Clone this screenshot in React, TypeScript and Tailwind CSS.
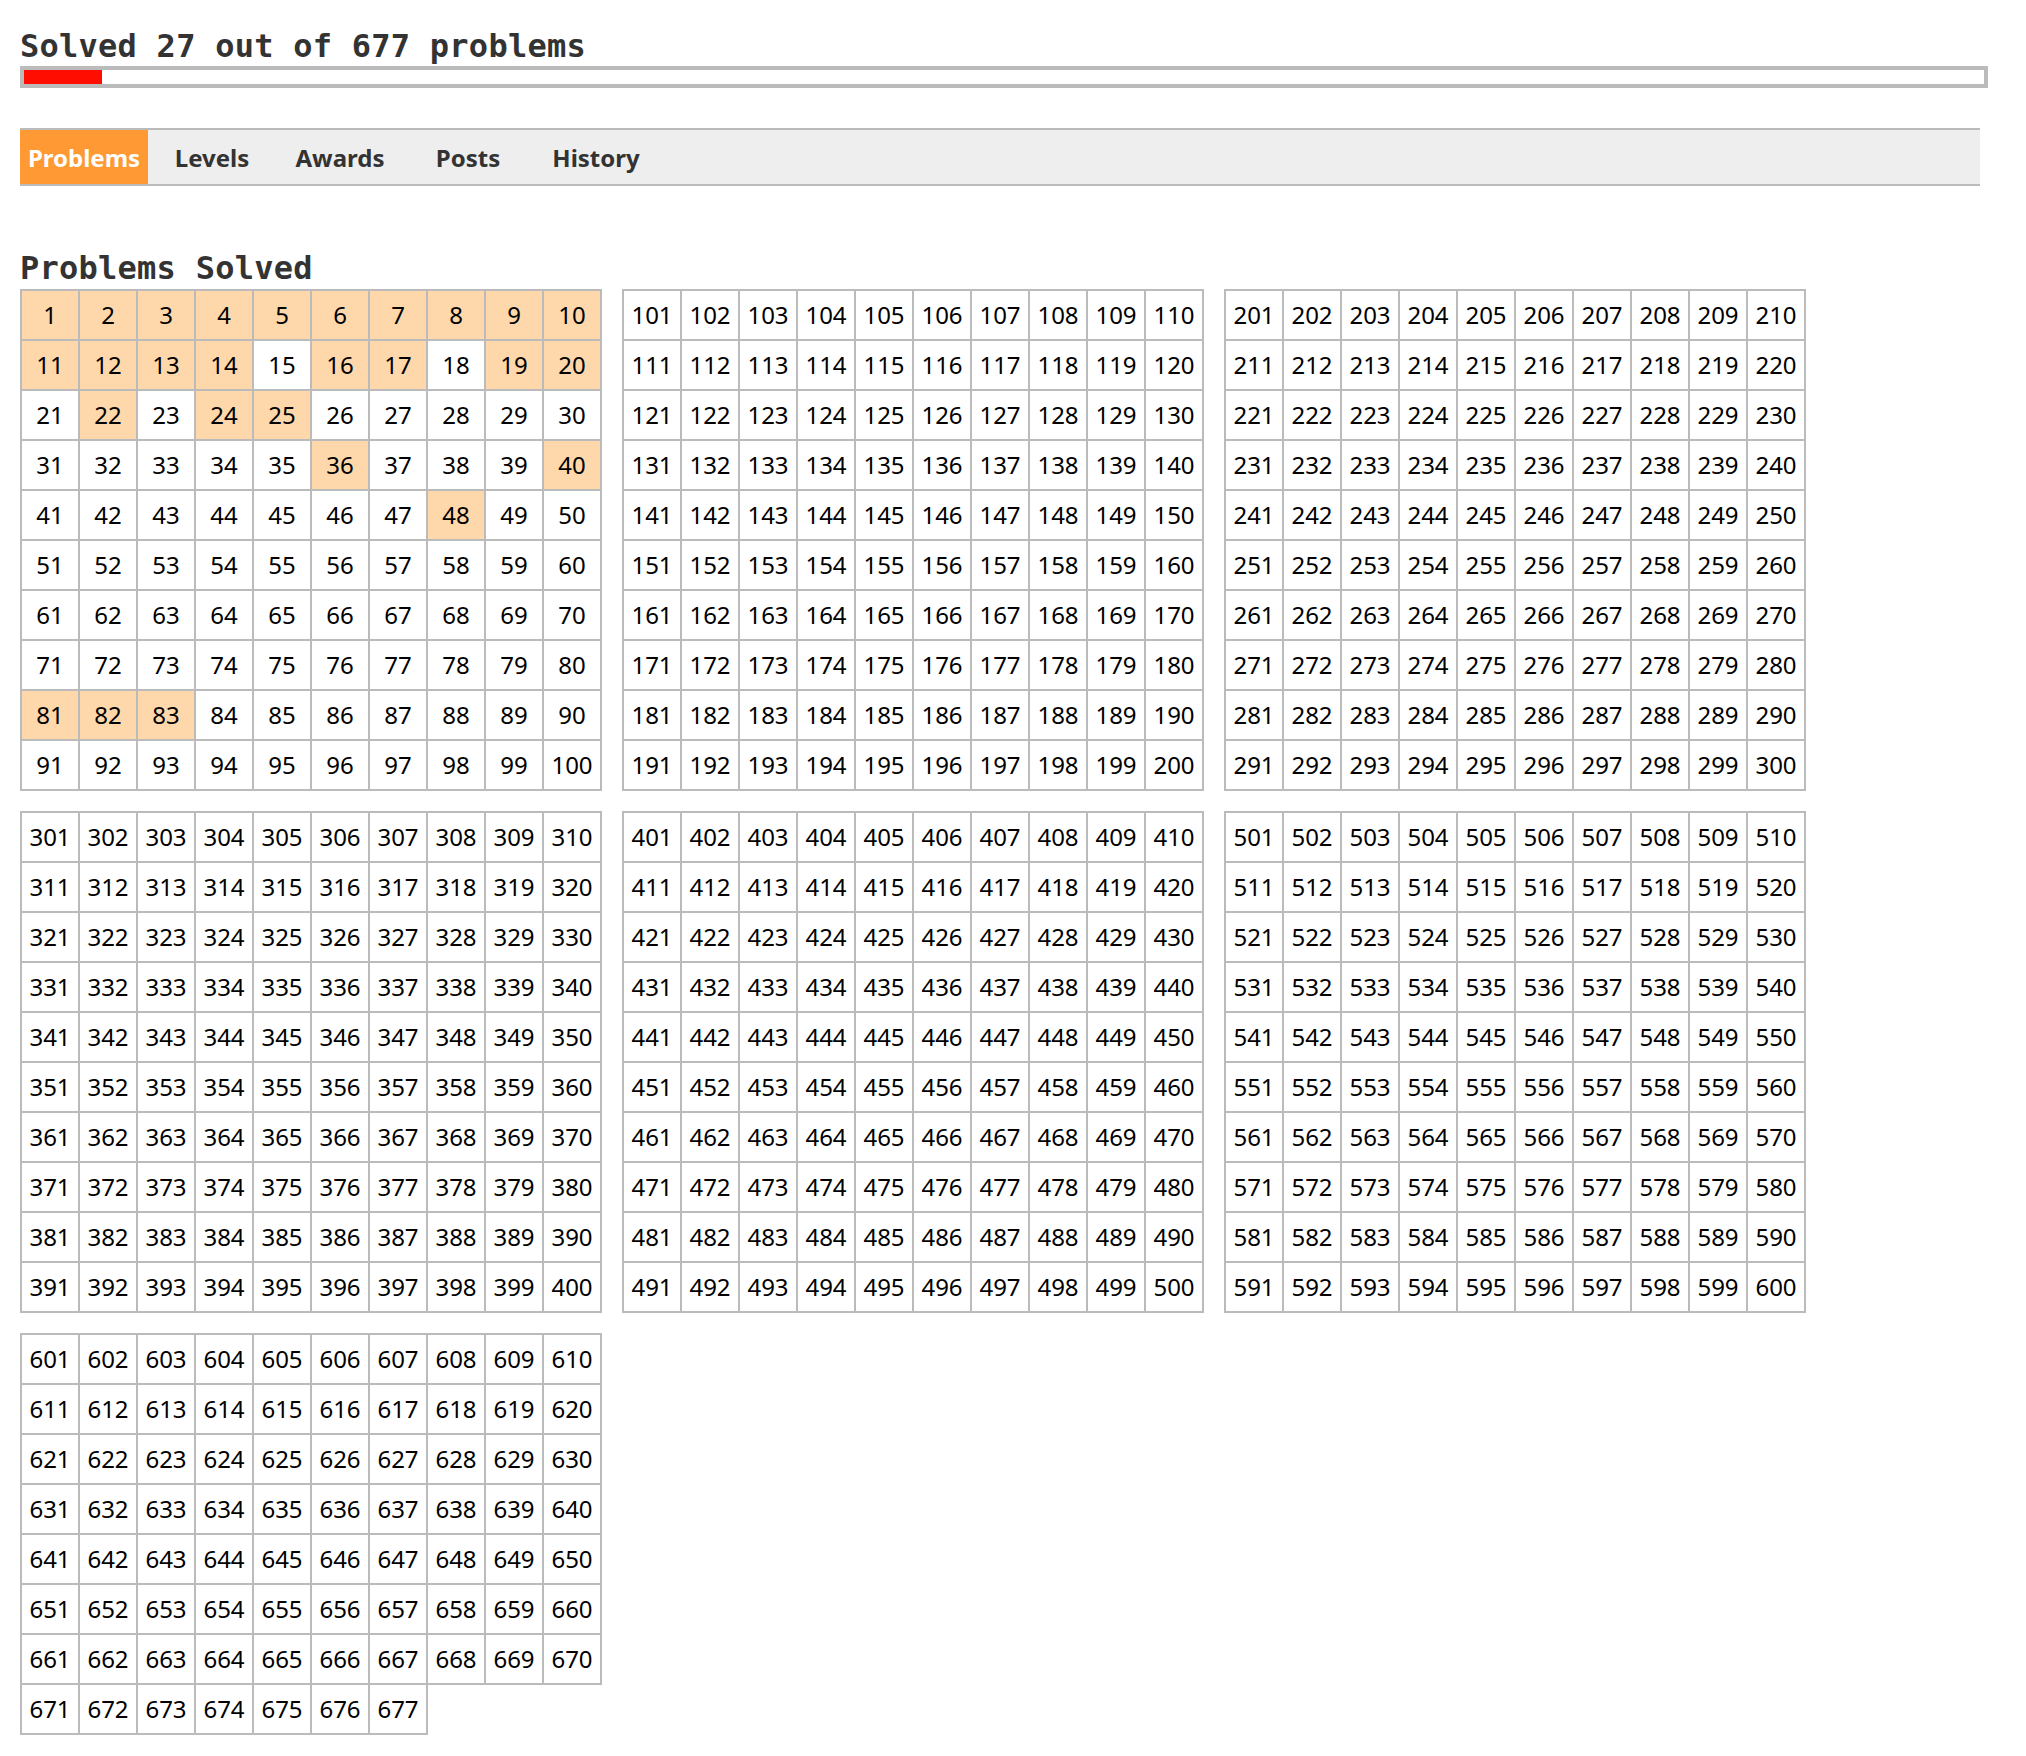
import React from "react";

const TOTAL = 677;
const SOLVED = new Set([
  1, 2, 3, 4, 5, 6, 7, 8, 9, 10, 11, 12, 13, 14, 16, 17, 19, 20, 22, 24, 25, 36, 40, 48, 81, 82, 83,
]);

const TABS = ["Problems", "Levels", "Awards", "Posts", "History"];

function Block({ start }: { start: number }) {
  const rows: number[][] = [];
  for (let r = 0; r < 10; r++) {
    const row: number[] = [];
    for (let c = 1; c <= 10; c++) {
      const n = start + r * 10 + c;
      if (n <= TOTAL) row.push(n);
    }
    if (row.length) rows.push(row);
  }
  return (
    <table className="border-collapse self-start">
      <tbody>
        {rows.map((row, i) => (
          <tr key={i}>
            {row.map((n) => (
              <td
                key={n}
                className={
                  "h-[50px] w-[58px] border-2 border-[#bbbbbb] p-0 text-center align-middle text-[24px] leading-[30px] text-black " +
                  (SOLVED.has(n) ? "bg-[#fed8ab]" : "bg-white")
                }
              >
                {n}
              </td>
            ))}
          </tr>
        ))}
      </tbody>
    </table>
  );
}

export default function App() {
  const blocks = [];
  for (let s = 0; s < TOTAL; s += 100) blocks.push(s);
  const pct = (SOLVED.size / TOTAL) * 100;

  return (
    <div className="min-h-screen bg-white px-[20px] pb-[23px] font-['Noto_Sans',sans-serif]">
      <h1 className="pt-[26px] font-['DejaVu_Sans_Mono',monospace] text-[32px] font-bold leading-[40px] tracking-[0.25px] text-[#333]">
        Solved {SOLVED.size} out of {TOTAL} problems
      </h1>
      <div className="h-[22px] w-[1968px] border-4 border-[#bbbbbb] bg-white">
        <div className="h-full bg-[#ff0d00]" style={{ width: `${pct}%` }} />
      </div>

      <div className="mt-[40px] flex w-[1960px] border-y-2 border-[#bbbbbb] bg-[#eeeeee]">
        {TABS.map((t, i) => (
          <div
            key={t}
            className={
              "w-[128px] pt-[1px] text-center text-[24px] font-bold leading-[53px] " +
              (i === 0 ? "bg-[#ff9933] text-white" : "text-[#333]")
            }
          >
            {t}
          </div>
        ))}
      </div>

      <h2 className="mt-[62px] font-['DejaVu_Sans_Mono',monospace] text-[32px] font-bold leading-[40px] tracking-[0.25px] text-[#333]">
        Problems Solved
      </h2>
      <div className="mt-[1px] flex w-[1986px] flex-wrap gap-[20px]">
        {blocks.map((s) => (
          <Block key={s} start={s} />
        ))}
      </div>
    </div>
  );
}
